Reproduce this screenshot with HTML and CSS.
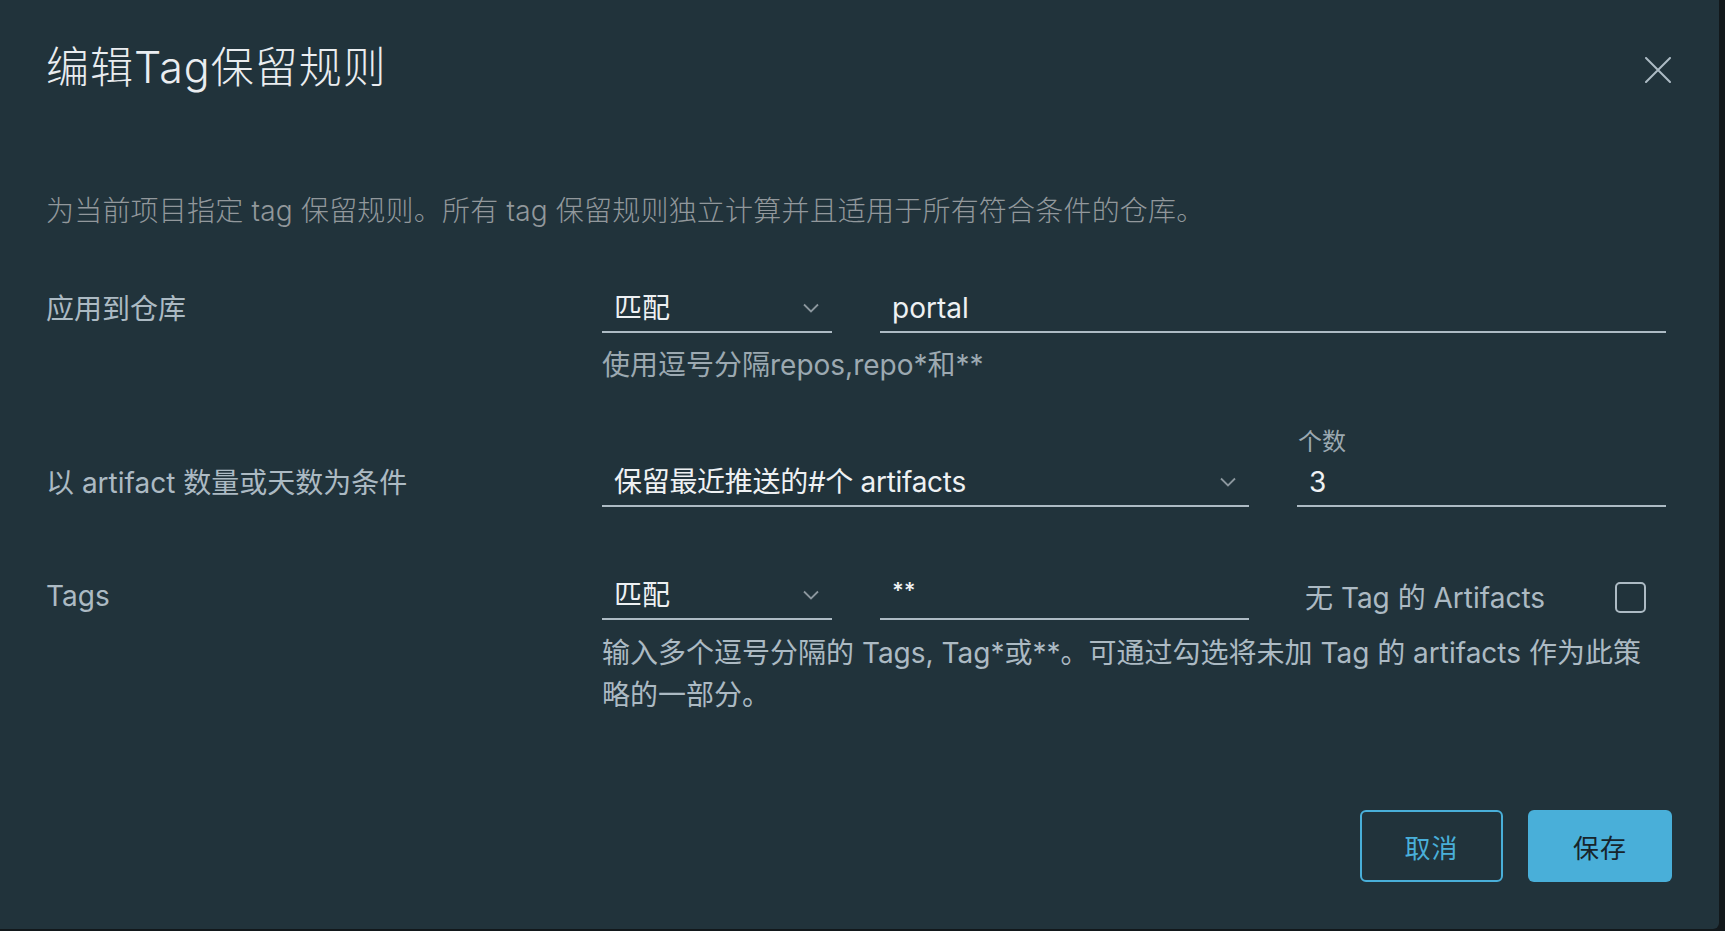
FILE: index.html
```html
<!DOCTYPE html>
<html lang="zh-CN">
<head>
<meta charset="utf-8">
<title>编辑Tag保留规则</title>
<link rel="stylesheet" href="styles.css">
</head>
<body>
<div class="modal">
  <header class="modal-header">
    <h3 class="modal-title">编辑Tag保留规则</h3>
    <button class="close-btn" aria-label="关闭">
      <svg width="26" height="26" viewBox="0 0 26 26"><path d="M1 1 L25 25 M25 1 L1 25" stroke="#adbbc4" stroke-width="2" fill="none" stroke-linecap="round"/></svg>
    </button>
  </header>
  <div class="modal-body">
    <p class="desc">为当前项目指定 tag 保留规则。所有 tag 保留规则独立计算并且适用于所有符合条件的仓库。</p>

    <div class="form-row row-repo">
      <label class="row-label c-l">应用到仓库</label>
      <div class="select c-a"><span>匹配</span><svg class="chev" width="16" height="10" viewBox="0 0 16 10"><path d="M1 1.5 L8 8.5 L15 1.5" stroke="#8c979e" stroke-width="1.8" fill="none"/></svg></div>
      <div class="text-input c-bc">portal</div>
      <div class="helper helper-dim c-all">使用逗号分隔repos,repo*和**</div>
    </div>

    <div class="form-row row-count">
      <span class="sub-label c-c">个数</span>
      <label class="row-label c-l r2">以 artifact 数量或天数为条件</label>
      <div class="select c-ab r2"><span class="sel-long">保留最近推送的#个 artifacts</span><svg class="chev" width="16" height="10" viewBox="0 0 16 10"><path d="M1 1.5 L8 8.5 L15 1.5" stroke="#8c979e" stroke-width="1.8" fill="none"/></svg></div>
      <div class="text-input c-c r2">3</div>
    </div>

    <div class="form-row row-tags">
      <label class="row-label c-l">Tags</label>
      <div class="select c-a"><span>匹配</span><svg class="chev" width="16" height="10" viewBox="0 0 16 10"><path d="M1 1.5 L8 8.5 L15 1.5" stroke="#8c979e" stroke-width="1.8" fill="none"/></svg></div>
      <div class="text-input stars c-b">**</div>
      <div class="untagged c-c"><span>无 Tag 的 Artifacts</span><span class="checkbox"></span></div>
      <div class="helper c-all">输入多个逗号分隔的 Tags, Tag*或**。可通过勾选将未加 Tag 的 artifacts 作为此策略的一部分。</div>
    </div>
  </div>
  <footer class="modal-footer">
    <button class="btn btn-outline">取消</button>
    <button class="btn btn-primary">保存</button>
  </footer>
</div>
</body>
</html>
```

FILE: styles.css
```css
html, body {
  margin: 0;
  padding: 0;
}
body {
  background: #12181b;
  width: 1725px;
  height: 931px;
  overflow: hidden;
  font-family: Inter, "Noto Sans CJK SC", sans-serif;
}
.modal {
  width: 1719px;
  height: 929px;
  box-sizing: border-box;
  background: #21333b;
  border-radius: 0 0 6px 0;
  display: flex;
  flex-direction: column;
}
.modal-header {
  display: flex;
  justify-content: space-between;
  align-items: center;
  padding: 41px 48px 0 46px;
}
.modal-title {
  margin: 0;
  font-size: 43px;
  line-height: 52px;
  font-weight: 300;
  letter-spacing: 1px;
  color: #eaedf0;
}
.close-btn {
  background: none;
  border: 0;
  padding: 0;
  width: 26px;
  height: 26px;
  margin-top: 6px;
  display: block;
}
.close-btn svg { display: block; }
.modal-body {
  padding-left: 46px;
}
.desc {
  margin: 97px 0 0;
  font-size: 28px;
  line-height: 42px;
  font-weight: 300;
  letter-spacing: 0.2px;
  color: #92989c;
}
.form-row {
  display: grid;
  grid-template-columns: 508px 230px 369px 369px;
  column-gap: 48px;
  font-size: 28px;
}
.c-l { grid-column: 1; }
.c-a { grid-column: 2; }
.c-b { grid-column: 3; }
.c-c { grid-column: 4; }
.c-bc { grid-column: 3 / 5; }
.c-ab { grid-column: 2 / 4; }
.c-all { grid-column: 2 / 5; }
.r2 { grid-row: 2; }
.row-repo { margin-top: 53px; }
.row-count { margin-top: 42px; }
.row-tags { margin-top: 65px; }
.row-label {
  color: #acbac3;
  line-height: 48px;
  font-weight: 400;
}
.select, .text-input {
  height: 48px;
  box-sizing: border-box;
  border-bottom: 2px solid #adbbc4;
  line-height: 46px;
  color: #eef1f3;
  padding: 0 13px 0 12px;
  white-space: nowrap;
}
.select {
  display: flex;
  justify-content: space-between;
  align-items: center;
}
.sel-long {
  letter-spacing: -0.3px;
}
.chev { display: block; }
.text-input.stars {
  font-size: 22px;
  line-height: 36px;
  font-weight: 600;
}
.helper {
  margin-top: 12px;
  line-height: 42px;
  color: #acbac3;
}
.helper-dim {
  line-height: 40px;
  color: #9ca9b1;
}
.sub-label {
  font-size: 24px;
  line-height: 30px;
  color: #9ca9b1;
  margin-bottom: 2px;
  padding-left: 1px;
}
.untagged {
  display: flex;
  align-items: center;
  justify-content: space-between;
  padding: 0 20px 0 8px;
  height: 48px;
  color: #acbac3;
}
.checkbox {
  width: 31px;
  height: 31px;
  box-sizing: border-box;
  border: 2px solid #adbbc4;
  border-radius: 5px;
  margin-top: 2px;
}
.modal-footer {
  margin-top: 94px;
  display: flex;
  justify-content: flex-end;
  gap: 25px;
  padding-right: 47px;
}
.btn {
  height: 72px;
  width: 143px;
  box-sizing: border-box;
  border-radius: 6px;
  font-family: Inter, "Noto Sans CJK SC", sans-serif;
  font-size: 26px;
  letter-spacing: 1px;
  padding: 0;
}
.btn-outline {
  background: transparent;
  border: 2px solid #49afd9;
  color: #49afd9;
}
.btn-primary {
  width: 144px;
  background: #49afd9;
  border: 0;
  color: #17242b;
}
```
